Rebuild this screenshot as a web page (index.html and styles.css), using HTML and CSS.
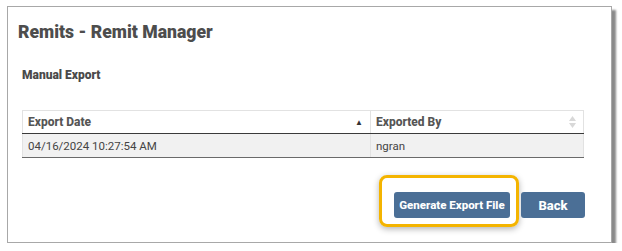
FILE: index.html
```html
<!DOCTYPE html>
<html>
<head>
<meta charset="utf-8">
<link rel="stylesheet" href="styles.css">
</head>
<body>
<div class="panel">
  <h1 class="title">Remits - Remit Manager</h1>
  <h2 class="section">Manual Export</h2>
  <table class="grid">
    <thead>
      <tr>
        <th class="col-date"><div class="th-in"><span>Export Date</span><span class="sort-asc">&#9650;</span></div></th>
        <th class="col-by"><div class="th-in"><span>Exported By</span>
          <svg class="sort-both" width="7" height="12" viewBox="0 0 7 12"><path d="M3.5 0L7 5H0z" fill="#d8d8d8"/><path d="M3.5 12L7 7H0z" fill="#d8d8d8"/></svg></div>
        </th>
      </tr>
    </thead>
    <tbody>
      <tr>
        <td>04/16/2024 10:27:54 AM</td>
        <td>ngran</td>
      </tr>
    </tbody>
  </table>
  <div class="actions">
    <div class="highlight"><button class="btn btn-gen">Generate Export File</button></div>
    <button class="btn btn-back">Back</button>
  </div>
</div>
</body>
</html>
```
FILE: styles.css
```css
html, body {
  margin: 0;
  padding: 0;
  background: #fff;
  font-family: Roboto, "Liberation Sans", sans-serif;
}
.panel {
  margin: 6px 0 0 7px;
  width: 603px;
  height: 235px;
  border: 1px solid #a8a8a8;
  box-shadow: 4px 4px 2px #8a8a8a;
  display: flex;
  flex-direction: column;
}
.title {
  margin: 14px 0 0 10px;
  font-size: 17.6px;
  line-height: 22px;
  font-weight: 900;
  color: #4d4d4d;
}
.section {
  margin: 25px 0 0 14px;
  font-size: 12px;
  line-height: 15px;
  font-weight: 900;
  color: #4a4a4a;
}
.grid {
  margin: 27px 0 0 14px;
  width: 562px;
  border-collapse: collapse;
  font-size: 11.5px;
  color: #444;
}
.grid th {
  height: 22px;
  padding: 0 5px;
  text-align: left;
  font-weight: 800;
  font-size: 12px;
  color: #555;
  border: 1px solid #e2e2e2;
  border-bottom: 1px solid #3a3a3a;
  background: #fff;
}
.grid th.col-date { width: 337px; }
.th-in {
  display: flex;
  align-items: center;
  justify-content: space-between;
}
.sort-asc {
  font-size: 8px;
  color: #333;
  margin-right: 2px;
}
.sort-both {
  margin-right: 2px;
}
.grid td {
  height: 23px;
  padding: 0 5px;
  background: #f1f1f1;
  border-left: 1px solid #e2e2e2;
  border-right: 1px solid #e2e2e2;
  border-bottom: 1px solid #6a6a6a;
  color: #444;
}
.actions {
  margin: 17px 0 0 0;
  display: flex;
  align-items: flex-start;
  padding-left: 371px;
}
.highlight {
  border: 3px solid #f4b400;
  border-radius: 8px;
  padding: 14px 6px 6px 12px;
  box-shadow: 0 2px 6px rgba(0,0,0,0.3);
}
.btn {
  background: #4b6f96;
  color: #fff;
  border: none;
  border-radius: 3px;
  font-family: Roboto, "Liberation Sans", sans-serif;
  font-weight: 800;
  height: 26px;
  padding: 0;
}
.btn-gen {
  width: 116px;
  font-size: 11.5px;
  display: block;
}
.btn-back {
  width: 64px;
  font-size: 13px;
  margin-left: 2px;
  margin-top: 17px;
}
```
